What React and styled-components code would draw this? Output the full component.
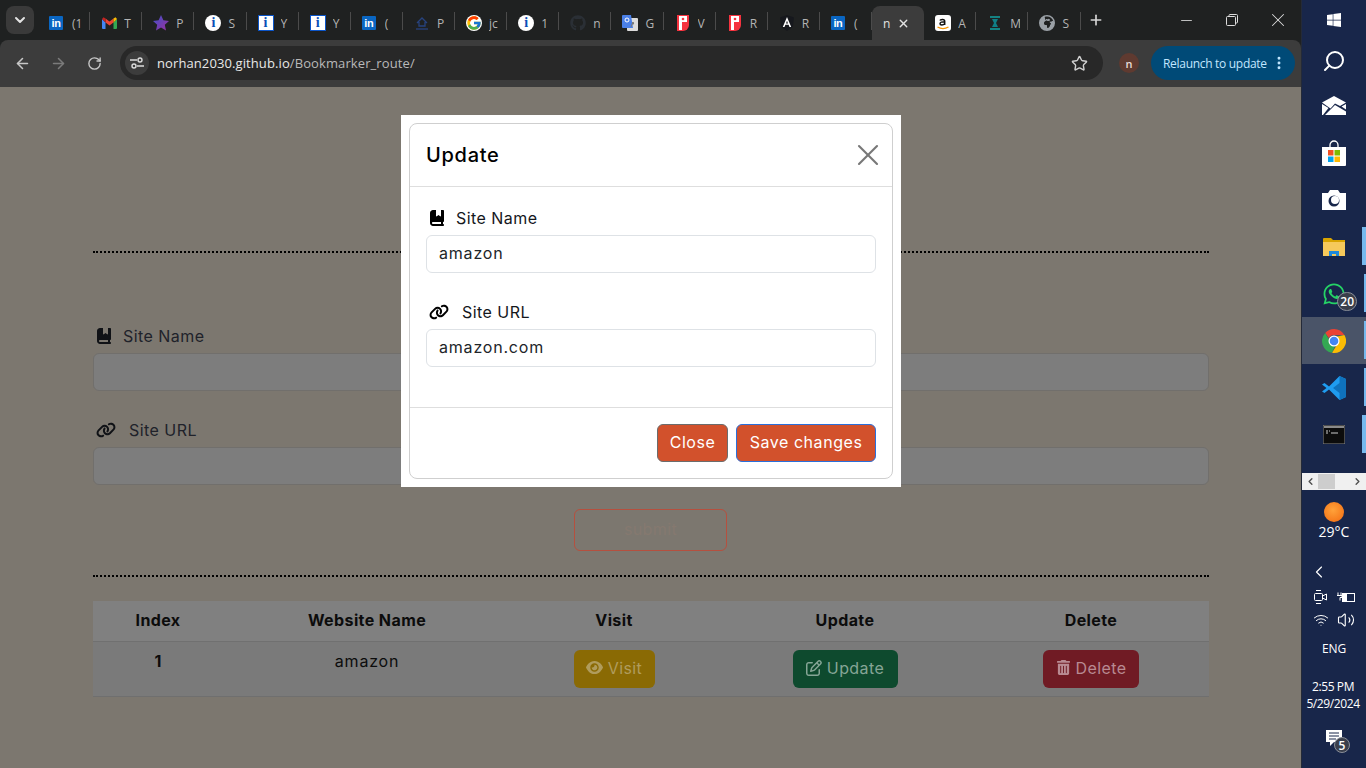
import React from 'react';
import styled, { createGlobalStyle } from 'styled-components';
import { ChevronDown, ArrowLeft, ArrowRight, RotateCw, Star, Plus, Minus, X, Search, ChevronLeft, Volume2, Wifi, EllipsisVertical } from 'lucide-react';
import { FaBookBookmark, FaLink, FaEye, FaRegPenToSquare, FaTrashCan, FaWindows, FaWhatsapp, FaGithub, FaEarthAfrica } from 'react-icons/fa6';
import { FcGoogle } from 'react-icons/fc';

const PAGE_FONT = 'Inter, "Open Sans", sans-serif';
const UI_FONT = '"Open Sans", "Noto Sans", sans-serif';

const GlobalStyle = createGlobalStyle`
  html, body {
    margin: 0;
    padding: 0;
    overflow: hidden;
    font-family: ${PAGE_FONT};
  }
  * {
    box-sizing: border-box;
  }
`;

const Screen = styled.div`
  display: grid;
  grid-template-columns: 1301px 65px;
  width: 1366px;
  height: 768px;
  overflow: hidden;
`;

const Browser = styled.div`
  display: flex;
  flex-direction: column;
  min-width: 0;
  background: #1f2121;
`;

/* tab strip */
const TabStrip = styled.div`
  display: flex;
  height: 40px;
  padding-left: 6px;
  background: #1f2121;
  flex-shrink: 0;
`;

const TabSearch = styled.div`
  display: flex;
  align-items: center;
  justify-content: center;
  width: 28px;
  height: 28px;
  margin: 6px 4px 0 0;
  border-radius: 8px;
  background: #3a3a3a;
  color: #e3e3e3;
`;

const Tab = styled.div`
  position: relative;
  display: flex;
  align-items: center;
  flex: 0 0 52.13px;
  height: 34px;
  margin-top: 6px;
  padding-left: 11px;
  gap: ${(props) => (props.$active ? '4px' : '7px')};
  font: 12px ${UI_FONT};
  color: ${(props) => (props.$active ? '#e3e3e3' : '#b4b4b4')};
  background: ${(props) => (props.$active ? '#3c3c3c' : 'transparent')};
  border-radius: 8px 8px 0 0;
  &::after {
    content: '';
    position: absolute;
    right: 0;
    top: 6px;
    height: 18px;
    width: 1px;
    background: ${(props) => (props.$plain ? 'transparent' : '#4b4b4b')};
  }
`;

const TabLabel = styled.span`
  width: 10px;
  overflow: hidden;
  white-space: nowrap;
`;

const FaviconBox = styled.span`
  display: flex;
  align-items: center;
  justify-content: center;
  flex: 0 0 16px;
  width: 16px;
  height: 16px;
`;

const LinkedinBadge = styled.span`
  display: flex;
  align-items: center;
  justify-content: center;
  width: 14px;
  height: 14px;
  margin-left: -2px;
  border-radius: 1px;
  background: #0a66c2;
  color: #fff;
  font: 700 11px 'Liberation Sans', sans-serif;
  letter-spacing: -0.5px;
`;

const InfoCircle = styled.span`
  display: flex;
  align-items: center;
  justify-content: center;
  width: 16px;
  height: 16px;
  border-radius: ${(props) => (props.$square ? '0' : '50%')};
  background: #fff;
  border: ${(props) => (props.$square ? '1.5px solid #0b55c9' : 'none')};
  color: #0b4fb8;
  font: 700 14px 'Liberation Serif', serif;
`;

const NewTab = styled.div`
  display: flex;
  align-items: center;
  justify-content: center;
  width: 30px;
  height: 40px;
  color: #d6d6d6;
`;

const WindowControls = styled.div`
  display: flex;
  margin-left: auto;
`;

const WindowButton = styled.div`
  display: flex;
  align-items: center;
  justify-content: center;
  width: 46px;
  height: 40px;
  color: #dcdcdc;
`;

/* toolbar */
const Toolbar = styled.div`
  display: flex;
  align-items: center;
  height: 47px;
  padding: 0 6px 1px 0;
  background: #3c3c3c;
  border-radius: 8px 8px 0 0;
  flex-shrink: 0;
`;

const NavButton = styled.div`
  display: flex;
  align-items: center;
  justify-content: center;
  flex: 0 0 36px;
  color: ${(props) => (props.$off ? '#7b7b7b' : '#c7c7c7')};
  &:first-child {
    margin-left: 4px;
  }
`;

const AddressBar = styled.div`
  display: flex;
  align-items: center;
  width: 983px;
  height: 34px;
  margin-left: 8px;
  padding: 0 15px 0 5px;
  border-radius: 17px;
  background: #282828;
  font: 13px ${UI_FONT};
  letter-spacing: 0.1px;
  color: #b9b9b9;
`;

const SiteInfo = styled.div`
  display: flex;
  align-items: center;
  justify-content: center;
  width: 24px;
  height: 24px;
  margin-right: 8px;
  border-radius: 50%;
  background: #3c3c3c;
  color: #dcdcdc;
`;

const Host = styled.span`
  color: #e8e8e8;
`;

const BookmarkStar = styled.div`
  display: flex;
  margin-left: auto;
  color: #d0d0d0;
`;

const Avatar = styled.div`
  display: flex;
  align-items: center;
  justify-content: center;
  width: 20px;
  height: 20px;
  margin-left: 16px;
  border-radius: 50%;
  background: #5f3a30;
  color: #e8dcd8;
  font: 600 11px ${UI_FONT};
`;

const Relaunch = styled.div`
  display: flex;
  align-items: center;
  justify-content: space-between;
  width: 144px;
  height: 34px;
  margin-left: 12px;
  padding: 0 8px 0 12px;
  border-radius: 17px;
  background: #004a77;
  color: #c2e7ff;
  font: 12px ${UI_FONT};
  letter-spacing: -0.3px;
  white-space: nowrap;
`;

/* page */
const Page = styled.div`
  position: relative;
  flex: 1;
  padding: 164px 0 0 93px;
  background: #7c776f;
  color: #1c1e24;
  overflow: hidden;
`;

const Container = styled.div`
  width: 1116px;
`;

const Dotted = styled.div`
  border-top: 2px dotted #000;
`;

const FormSection = styled.div`
  margin-top: ${(props) => props.$top || 0}px;
`;

const FieldLabel = styled.div`
  display: flex;
  align-items: center;
  height: 24px;
  margin-bottom: 5px;
  padding-left: 3px;
  gap: ${(props) => props.$gap}px;
  font-size: 16px;
  letter-spacing: 0.45px;
  color: ${(props) => props.$color};
  svg {
    color: ${(props) => props.$iconColor};
  }
`;

const PageInput = styled.div`
  height: 38px;
  margin-bottom: 27px;
  background: #7d7d7d;
  border: 1px solid #716f6c;
  border-radius: 6px;
`;

const SubmitRow = styled.div`
  display: flex;
  justify-content: center;
  margin: -3px 1px 24px 0;
`;

const SubmitButton = styled.div`
  display: flex;
  align-items: center;
  justify-content: center;
  width: 153px;
  height: 42px;
  padding-bottom: 2px;
  border: 1px solid #b5503f;
  border-radius: 6px;
  font-size: 16px;
  letter-spacing: 0.4px;
  color: #85796f;
`;

const Table = styled.table`
  width: 1116px;
  margin-top: 24px;
  border-collapse: collapse;
  table-layout: fixed;
  text-align: center;
  font-size: 16px;
  color: #0c0c0c;
`;

const HeadCell = styled.th`
  width: ${(props) => props.$w}px;
  height: 40px;
  padding: 0 0 2px;
  font-weight: 700;
  letter-spacing: 0.4px;
  background: #808080;
  border-bottom: 1px solid #707070;
`;

const Cell = styled.td`
  height: 55px;
  padding: 7px 0 8px;
  vertical-align: top;
  line-height: 24px;
  letter-spacing: ${(props) => (props.$bold ? 0 : '0.8px')};
  font-weight: ${(props) => (props.$bold ? 700 : 400)};
  background: #7a7a7a;
  border-bottom: 1px solid #6f6f6f;
`;

const ActionButton = styled.div`
  display: inline-flex;
  align-items: center;
  justify-content: center;
  gap: 5px;
  width: ${(props) => props.$w}px;
  height: 38px;
  margin-top: 1px;
  padding-bottom: 2px;
  border-radius: 6px;
  background: ${(props) => props.$bg};
  color: ${(props) => props.$fg};
  font-size: 16px;
  letter-spacing: 0.4px;
`;

/* modal */
const ModalLayer = styled.div`
  position: absolute;
  inset: 0;
  display: flex;
  justify-content: center;
  padding: 28px 0 0 1px;
`;

const ModalFrame = styled.div`
  width: 500px;
  height: 372px;
  padding: 8px;
  background: #fff;
`;

const ModalContent = styled.div`
  display: flex;
  flex-direction: column;
  height: 100%;
  border: 1px solid #cfcfcf;
  border-radius: 8px;
  background: #fff;
`;

const ModalHeader = styled.div`
  display: flex;
  align-items: center;
  justify-content: space-between;
  height: 63px;
  padding: 0 16px;
  border-bottom: 1px solid #dedede;
  color: #000;
`;

const ModalTitle = styled.div`
  font-size: 20px;
  font-weight: 500;
  letter-spacing: 0.7px;
`;

const CloseX = styled.div`
  display: flex;
  margin-right: -10px;
  color: #777;
`;

const ModalBody = styled.div`
  flex: 1;
  padding: 19px 16px 0;
`;

const ModalInput = styled.div`
  display: flex;
  align-items: center;
  height: 38px;
  margin-bottom: 27px;
  padding: 0 12px 2px;
  border: 1px solid #dee2e6;
  border-radius: 6px;
  font-size: 16px;
  letter-spacing: 0.8px;
  color: #212529;
`;

const ModalFooter = styled.div`
  display: flex;
  justify-content: flex-end;
  gap: 8px;
  height: 71px;
  padding: 16px;
  border-top: 1px solid #dedede;
`;

const ModalButton = styled.div`
  display: flex;
  align-items: center;
  justify-content: center;
  width: ${(props) => props.$w}px;
  height: 38px;
  padding-bottom: 2px;
  border-radius: 6px;
  border: 1px solid ${(props) => props.$edge};
  background: #d2512c;
  color: #fff;
  font-size: 16px;
  letter-spacing: 0.55px;
`;

/* windows taskbar */
const Taskbar = styled.div`
  display: flex;
  flex-direction: column;
  align-items: stretch;
  background: #18264a;
  border-left: 1px solid #242a38;
  color: #fff;
  font: 12px ${UI_FONT};
`;

const TaskItem = styled.div`
  position: relative;
  display: flex;
  align-items: center;
  justify-content: center;
  height: ${(props) => props.$h || 47}px;
  background: ${(props) => (props.$active ? '#4a5468' : 'transparent')};
`;

const RunBar = styled.span`
  position: absolute;
  top: 4px;
  bottom: 5px;
  right: 0;
  width: ${(props) => props.$w || 2}px;
  background: #76b9ed;
`;

const CountBadge = styled.span`
  position: absolute;
  display: flex;
  align-items: center;
  justify-content: center;
  right: ${(props) => props.$r}px;
  bottom: ${(props) => props.$b}px;
  min-width: ${(props) => props.$size}px;
  height: ${(props) => props.$size}px;
  padding: 0 2px;
  border-radius: 10px;
  background: #3a3f4c;
  border: 1px solid #8a8f99;
  color: #fff;
  font: 600 12px ${UI_FONT};
`;

const ScrollStrip = styled.div`
  display: flex;
  align-items: center;
  height: 17px;
  margin-top: 15px;
  padding: 0 3px;
  background: #f0f0f0;
  color: #505050;
`;

const ScrollThumb = styled.span`
  width: 17px;
  height: 15px;
  margin: 0 auto 0 2px;
  background: #cdcdcd;
`;

const Weather = styled.div`
  display: flex;
  flex-direction: column;
  align-items: center;
  margin-top: 12px;
  font-size: 14px;
`;

const Sun = styled.span`
  width: 20px;
  height: 20px;
  border-radius: 50%;
  background: radial-gradient(circle at 45% 40%, #ffa23a, #f26a10);
`;

const TrayChevron = styled.div`
  display: flex;
  margin: 21px 0 0 7px;
`;

const TrayRow = styled.div`
  display: flex;
  justify-content: center;
  align-items: center;
  gap: 8px;
  margin-top: ${(props) => props.$top}px;
`;

const Lang = styled.div`
  margin-top: 11px;
  text-align: center;
  font-size: 12px;
  letter-spacing: -0.2px;
`;

const Clock = styled.div`
  margin: 21px 2px 0 0;
  text-align: center;
  font-size: 12px;
  line-height: 17px;
  letter-spacing: -0.4px;
  white-space: nowrap;
`;

const Notify = styled.div`
  position: relative;
  display: flex;
  justify-content: center;
  margin-top: 18px;
`;

const Favicon = ({ kind }) => {
  switch (kind) {
    case 'in':
      return <LinkedinBadge>in</LinkedinBadge>;
    case 'gmail':
      return (
        <svg width="15" height="12" viewBox="0 0 15 12">
          <path d="M0 2v9a1 1 0 0 0 1 1h2.500V5.500z" fill="#4285f4" />
          <path d="M15 2v9a1 1 0 0 1-1 1h-2.500V5.500z" fill="#34a853" />
          <path d="M3.500 5.500 7.500 8.500 11.500 5.500V1.500L7.500 4.500 3.500 1.500z" fill="#ea4335" />
          <path d="M0 2 1.500 .3 3.500 1.500V5.500z" fill="#c5221f" />
          <path d="M15 2 13.500 .3 11.500 1.500V5.500z" fill="#fbbc04" />
        </svg>
      );
    case 'star':
      return (
        <svg width="16" height="16" viewBox="0 0 16 16">
          <defs>
            <linearGradient id="starFill" x1="0" y1="0" x2="1" y2="1">
              <stop offset="0" stopColor="#3f51c8" />
              <stop offset="1" stopColor="#9b2f9f" />
            </linearGradient>
          </defs>
          <path d="M8 0l2.400 5.300 5.600.6-4.200 3.800 1.200 5.700L8 12.500l-5 2.900 1.200-5.700L0 5.900l5.600-.6z" fill="url(#starFill)" />
        </svg>
      );
    case 'info':
      return <InfoCircle>i</InfoCircle>;
    case 'square':
      return <InfoCircle $square>i</InfoCircle>;
    case 'house':
      return (
        <svg width="14" height="16" viewBox="0 0 14 16" fill="none" stroke="#27437f" strokeWidth="1.300">
          <path d="M2 8l5-5 5 5M4 7v4h6V7" />
          <path d="M1 14h12" />
        </svg>
      );
    case 'google':
      return <FcGoogle size={16} style={{ background: '#fff', borderRadius: '50%' }} />;
    case 'github':
      return <FaGithub size={16} color="#2a2f35" />;
    case 'translate':
      return (
        <svg width="16" height="16" viewBox="0 0 16 16">
          <rect x="5" y="3" width="11" height="13" rx="1" fill="#dcdcdc" />
          <path d="M1 0h8l2 13H1a1 1 0 0 1-1-1V1a1 1 0 0 1 1-1z" fill="#4a80e8" />
          <path d="M11 7l.7 2h-1.400zM9 12l2-5" stroke="#777" fill="none" />
          <circle cx="5" cy="5" r="2" fill="none" stroke="#fff" />
        </svg>
      );
    case 'pdf':
      return (
        <svg width="12" height="16" viewBox="0 0 12 16">
          <path d="M0 0h12v10a6 6 0 0 1-6 6H0z" fill="#f5333f" />
          <path d="M2 1h8v6H5v8H2z" fill="#fff" />
          <circle cx="6" cy="4" r="1.300" fill="#f5333f" />
        </svg>
      );
    case 'angular':
      return (
        <svg width="14" height="16" viewBox="0 0 14 16">
          <path d="M7 0l7 2.500-1.100 9.300L7 16l-5.900-4.200L0 2.500z" fill="#16181d" />
          <path d="M7 2 2.800 12h1.700l.9-2.200h3.200l.9 2.200h1.700zM6 8.400 7 5.800l1 2.600z" fill="#fff" />
        </svg>
      );
    case 'amazon':
      return (
        <svg width="16" height="16" viewBox="0 0 16 16">
          <rect width="16" height="16" rx="3" fill="#fff" />
          <path d="M5 5.500c.3-1.300 4.700-1.800 4.700.8v3.700M9.700 7c-3-.4-4.700.2-4.700 1.700 0 1.600 3.200 1.600 4.700 0" fill="none" stroke="#111" strokeWidth="1.500" />
          <path d="M2.500 12c3.500 2 7.500 2 11 0" fill="none" stroke="#f79400" strokeWidth="1.300" />
        </svg>
      );
    case 'teal':
      return (
        <svg width="12" height="14" viewBox="0 0 12 14">
          <path d="M1 1h10M1 13h10" stroke="#12a3a3" strokeWidth="1.500" />
          <path d="M3 3h6L7 7l2 4H3l2-4z" fill="#0f7f86" />
        </svg>
      );
    case 'globe':
      return <FaEarthAfrica size={16} color="#9aa0a6" />;
    default:
      return null;
  }
};

const tabs = [
  ['in', '(1'], ['gmail', 'T'], ['star', 'P'], ['info', 'S'], ['square', 'Y'], ['square', 'Y'],
  ['in', '('], ['house', 'P'], ['google', 'jc'], ['info', '1'], ['github', 'n'], ['translate', 'G'],
  ['pdf', 'V'], ['pdf', 'R'], ['angular', 'R'], ['in', '('],
];

const afterTabs = [
  ['amazon', 'A'], ['teal', 'M'], ['globe', 'S'],
];

const StoreIcon = () => (
  <svg width="24" height="26" viewBox="0 0 24 26">
    <path d="M8 7V5a4 4 0 0 1 8 0v2" fill="none" stroke="#fff" strokeWidth="1.300" />
    <path d="M0 7h24v18a1 1 0 0 1-1 1H1a1 1 0 0 1-1-1z" fill="#fff" />
    <rect x="6" y="10" width="5.500" height="5.500" fill="#f25022" />
    <rect x="12.500" y="10" width="5.500" height="5.500" fill="#7fba00" />
    <rect x="6" y="16.500" width="5.500" height="5.500" fill="#00a4ef" />
    <rect x="12.500" y="16.500" width="5.500" height="5.500" fill="#ffb900" />
  </svg>
);

const MailIcon = () => (
  <svg width="24" height="19" viewBox="0 0 24 19">
    <path d="M0 6.500 12 0l12 6.500-6 3.500-5-2.500-4.500 5z" fill="#fff" />
    <path d="M0 8 6.500 12 1 19H0zM3 19l10-10 11 6.500V19zM24 8v5.500l-4.500-3z" fill="#fff" />
  </svg>
);

const CameraIcon = () => (
  <svg width="24" height="20" viewBox="0 0 24 20">
    <path d="M0 3h6l2-3h8l2 3h6v17H0z" fill="#fff" />
    <circle cx="12" cy="11" r="5.500" fill="#18264a" />
    <circle cx="13" cy="10" r="4" fill="#fff" />
  </svg>
);

const FolderIcon = () => (
  <svg width="22" height="18" viewBox="0 0 22 18">
    <path d="M0 1a1 1 0 0 1 1-1h7l2 2h12v3H0z" fill="#d9a400" />
    <path d="M0 4h22v14H0z" fill="#f6c95b" />
    <path d="M6 18v-5h10v5h-3v-2H9v2z" fill="#1f88d9" />
  </svg>
);

const ChromeIcon = () => (
  <svg width="24" height="24" viewBox="0 0 24 24">
    <path d="M12 0a12 12 0 0 1 10.400 6H12a6 6 0 0 0-5.200 3L3.200 3.900A12 12 0 0 1 12 0z" fill="#ea4335" />
    <path d="M3.200 3.900 8.500 13a4 4 0 0 0 5 2.700l-3.400 8.100A12 12 0 0 1 3.200 3.900z" fill="#34a853" />
    <path d="M22.400 6A12 12 0 0 1 10.100 23.800L15.400 15A6 6 0 0 0 15 7.500z" fill="#fbbc04" />
    <circle cx="12" cy="12" r="5.500" fill="#fff" />
    <circle cx="12" cy="12" r="4.300" fill="#4285f4" />
  </svg>
);

const VsCodeIcon = () => (
  <svg width="24" height="24" viewBox="0 0 24 24">
    <path d="M17.500 0 24 3v18l-6.500 3L7 13.500 2.500 17 0 15.500 4.500 12 0 8.500 2.500 7 7 10.500z" fill="#1f9cf0" />
    <path d="M17.500 0 24 3v18l-6.500 3V17L11 12l6.500-5z" fill="#0f72bd" />
  </svg>
);

const TerminalIcon = () => (
  <svg width="22" height="19" viewBox="0 0 22 19">
    <rect width="22" height="19" fill="#0c0c0c" stroke="#888" />
    <rect x="1" y="1" width="20" height="2" fill="#8a8a8a" />
    <path d="M3 6h2M6 6h1M3 8h2M8 8h7" stroke="#ccc" strokeWidth="1" />
  </svg>
);

const SiteInfoIcon = () => (
  <svg width="14" height="14" viewBox="0 0 14 14" fill="none" stroke="currentColor" strokeWidth="1.400">
    <path d="M0 4h7M7 10h7" />
    <circle cx="10" cy="4" r="2" />
    <circle cx="4" cy="10" r="2" />
  </svg>
);

const RestoreIcon = () => (
  <svg width="12" height="12" viewBox="0 0 12 12" fill="none" stroke="currentColor">
    <rect x=".5" y="2.500" width="9" height="9" rx="1" />
    <path d="M3 2.500V1.500a1 1 0 0 1 1-1h6.500a1 1 0 0 1 1 1V8a1 1 0 0 1-1 1h-1" />
  </svg>
);

const MeetIcon = () => (
  <svg width="16" height="18" viewBox="0 0 16 18" fill="none" stroke="#fff">
    <rect x="1.500" y="5.500" width="8" height="7" rx="1" />
    <path d="M9.500 8l4-2v6l-4-2M3 2.500h5M3 15.500h5" />
  </svg>
);

const BatteryIcon = () => (
  <svg width="18" height="14" viewBox="0 0 18 14" fill="none" stroke="#fff">
    <rect x="5.500" y="3.500" width="12" height="8" />
    <path d="M1 2.500v3M4 2.500v3M0 5.500h5v2H3v3" />
    <rect x="6.500" y="4.500" width="3" height="6" fill="#fff" />
  </svg>
);

const NotifyIcon = () => (
  <svg width="16" height="17" viewBox="0 0 16 17">
    <path d="M0 0h16v12H8l-4 4v-4H0z" fill="#fff" />
    <path d="M3 3h10M3 6h10M3 9h7" stroke="#18264a" />
  </svg>
);

const FieldTitle = ({ icon, text, gap, color, iconColor }) => (
  <FieldLabel $gap={gap} $color={color} $iconColor={iconColor}>
    {icon}
    <span>{text}</span>
  </FieldLabel>
);

const App = () => (
  <Screen>
    <GlobalStyle />
    <Browser>
      <TabStrip>
        <TabSearch>
          <ChevronDown size={16} strokeWidth={3} />
        </TabSearch>
        {tabs.map(([kind, label], i) => (
          <Tab key={i}>
            <FaviconBox>
              <Favicon kind={kind} />
            </FaviconBox>
            <TabLabel>{label}</TabLabel>
          </Tab>
        ))}
        <Tab $active $plain>
          <TabLabel>n</TabLabel>
          <X size={13} strokeWidth={2.5} />
        </Tab>
        {afterTabs.map(([kind, label], i) => (
          <Tab key={i}>
            <FaviconBox>
              <Favicon kind={kind} />
            </FaviconBox>
            <TabLabel>{label}</TabLabel>
          </Tab>
        ))}
        <NewTab>
          <Plus size={16} strokeWidth={2.5} />
        </NewTab>
        <WindowControls>
          <WindowButton>
            <Minus size={17} strokeWidth={1.2} />
          </WindowButton>
          <WindowButton>
            <RestoreIcon />
          </WindowButton>
          <WindowButton>
            <X size={22} strokeWidth={1.1} />
          </WindowButton>
        </WindowControls>
      </TabStrip>

      <Toolbar>
        <NavButton>
          <ArrowLeft size={17} strokeWidth={2.2} />
        </NavButton>
        <NavButton $off>
          <ArrowRight size={17} strokeWidth={2.2} />
        </NavButton>
        <NavButton>
          <RotateCw size={15} strokeWidth={2.2} />
        </NavButton>
        <AddressBar>
          <SiteInfo>
            <SiteInfoIcon />
          </SiteInfo>
          <Host>norhan2030.github.io</Host>/Bookmarker_route/
          <BookmarkStar>
            <Star size={17} strokeWidth={2} />
          </BookmarkStar>
        </AddressBar>
        <Avatar>n</Avatar>
        <Relaunch>
          Relaunch to update
          <EllipsisVertical size={16} strokeWidth={2.4} />
        </Relaunch>
      </Toolbar>

      <Page>
        <Container>
          <Dotted />
          <FormSection $top={71}>
            <FieldTitle icon={<FaBookBookmark size={16} />} text="Site Name" gap={11} color="#20222a" iconColor="#101216" />
            <PageInput />
            <FieldTitle icon={<FaLink size={20} />} text="Site URL" gap={13} color="#20222a" iconColor="#101216" />
            <PageInput />
          </FormSection>
          <SubmitRow>
            <SubmitButton>submit</SubmitButton>
          </SubmitRow>
          <Dotted />
          <Table>
            <thead>
              <tr>
                <HeadCell $w={130}>Index</HeadCell>
                <HeadCell $w={288}>Website Name</HeadCell>
                <HeadCell $w={206}>Visit</HeadCell>
                <HeadCell $w={256}>Update</HeadCell>
                <HeadCell $w={236}>Delete</HeadCell>
              </tr>
            </thead>
            <tbody>
              <tr>
                <Cell $bold>1</Cell>
                <Cell>amazon</Cell>
                <Cell>
                  <ActionButton $w={81} $bg="#8a6a04" $fg="#b09c5c">
                    <FaEye size={17} /> Visit
                  </ActionButton>
                </Cell>
                <Cell>
                  <ActionButton $w={105} $bg="#0e4a2e" $fg="#86a596">
                    <FaRegPenToSquare size={16} /> Update
                  </ActionButton>
                </Cell>
                <Cell>
                  <ActionButton $w={96} $bg="#701b24" $fg="#b88a92">
                    <FaTrashCan size={15} /> Delete
                  </ActionButton>
                </Cell>
              </tr>
            </tbody>
          </Table>
        </Container>

        <ModalLayer>
          <ModalFrame>
            <ModalContent>
              <ModalHeader>
                <ModalTitle>Update</ModalTitle>
                <CloseX>
                  <X size={36} strokeWidth={1.4} />
                </CloseX>
              </ModalHeader>
              <ModalBody>
                <FieldTitle icon={<FaBookBookmark size={16} />} text="Site Name" gap={11} color="#15171c" iconColor="#000" />
                <ModalInput>amazon</ModalInput>
                <FieldTitle icon={<FaLink size={20} />} text="Site URL" gap={13} color="#15171c" iconColor="#000" />
                <ModalInput>amazon.com</ModalInput>
              </ModalBody>
              <ModalFooter>
                <ModalButton $w={71} $edge="#6c6c6c">Close</ModalButton>
                <ModalButton $w={140} $edge="#2a6fdb">Save changes</ModalButton>
              </ModalFooter>
            </ModalContent>
          </ModalFrame>
        </ModalLayer>
      </Page>
    </Browser>

    <Taskbar>
      <TaskItem $h={40}>
        <FaWindows size={16} />
      </TaskItem>
      <TaskItem $h={42}>
        <Search size={24} strokeWidth={2} style={{ transform: 'scaleX(-1)' }} />
      </TaskItem>
      <TaskItem>
        <MailIcon />
      </TaskItem>
      <TaskItem>
        <StoreIcon />
      </TaskItem>
      <TaskItem>
        <CameraIcon />
      </TaskItem>
      <TaskItem>
        <FolderIcon />
        <RunBar $w={4} />
      </TaskItem>
      <TaskItem>
        <FaWhatsapp size={24} color="#25d366" />
        <CountBadge $r={9} $b={6} $size={19}>20</CountBadge>
        <RunBar />
      </TaskItem>
      <TaskItem $active>
        <ChromeIcon />
        <RunBar />
      </TaskItem>
      <TaskItem>
        <VsCodeIcon />
        <RunBar />
      </TaskItem>
      <TaskItem>
        <TerminalIcon />
        <RunBar $w={4} />
      </TaskItem>

      <ScrollStrip>
        <ChevronLeft size={11} strokeWidth={3} />
        <ScrollThumb />
        <ChevronLeft size={11} strokeWidth={3} style={{ transform: 'scaleX(-1)' }} />
      </ScrollStrip>

      <Weather>
        <Sun />
        29°C
      </Weather>

      <TrayChevron>
        <ChevronLeft size={20} strokeWidth={1.4} />
      </TrayChevron>
      <TrayRow $top={6}>
        <MeetIcon />
        <BatteryIcon />
      </TrayRow>
      <TrayRow $top={5}>
        <Wifi size={16} strokeWidth={1.5} />
        <Volume2 size={18} strokeWidth={1.5} />
      </TrayRow>
      <Lang>ENG</Lang>
      <Clock>
        2:55 PM
        <br />
        5/29/2024
      </Clock>
      <Notify>
        <NotifyIcon />
        <CountBadge $r={16} $b={-6} $size={16}>5</CountBadge>
      </Notify>
    </Taskbar>
  </Screen>
);

export default App;
